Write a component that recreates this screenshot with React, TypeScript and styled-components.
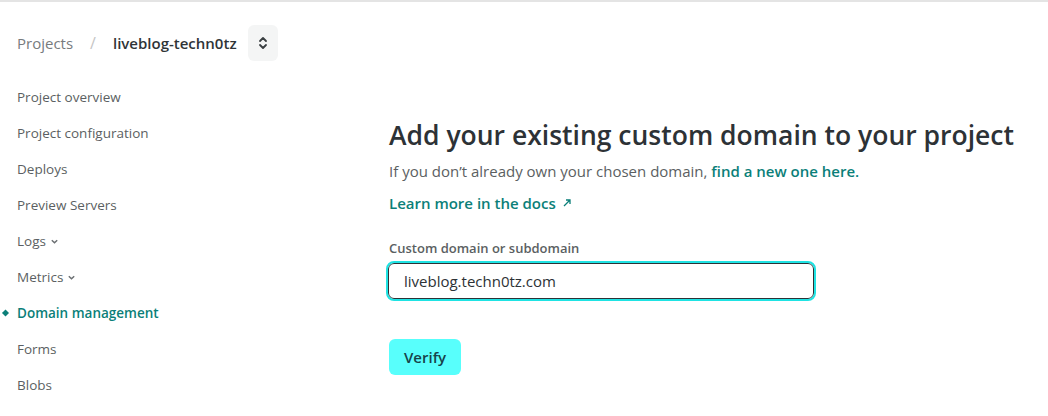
import React from 'react';
import styled, { createGlobalStyle } from 'styled-components';

const GlobalStyle = createGlobalStyle`
  html, body {
    margin: 0;
    padding: 0;
    background: #fff;
    font-family: 'Open Sans', 'Noto Sans', sans-serif;
  }
`;

const Page = styled.div`
  width: 1048px;
  height: 416px;
  border-top: 2px solid #e4e4e4;
  box-sizing: border-box;
  overflow: hidden;
`;

const Header = styled.div`
  display: flex;
  align-items: center;
  height: 36px;
  margin-top: 23px;
  padding-left: 17px;
`;

const Crumb = styled.span<{ current?: boolean }>`
  font-size: 15px;
  color: ${p => (p.current ? '#2f3437' : '#777b7e')};
  font-weight: ${p => (p.current ? 600 : 400)};
`;

const Slash = styled.span`
  color: #c5c5c5;
  font-size: 16px;
  margin: 0 17px 0 17px;
`;

const SwitchButton = styled.button`
  width: 30px;
  height: 36px;
  margin-left: 11px;
  border: none;
  border-radius: 6px;
  background: #f4f5f5;
  display: flex;
  align-items: center;
  justify-content: center;
  padding: 0;
`;

const Body = styled.div`
  display: grid;
  grid-template-columns: 389px 1fr;
`;

const Sidebar = styled.nav`
  display: flex;
  flex-direction: column;
  padding-top: 18px;
`;

const NavItem = styled.div<{ active?: boolean }>`
  position: relative;
  height: 36px;
  display: flex;
  align-items: center;
  gap: 4px;
  padding-left: 17px;
  font-size: 13.5px;
  color: ${p => (p.active ? '#0b7f79' : '#5b5f62')};
  font-weight: ${p => (p.active ? 600 : 400)};
`;

const Bullet = styled.span`
  position: absolute;
  left: 3px;
  top: 50%;
  width: 5px;
  height: 5px;
  background: #0b7f79;
  transform: translateY(-50%) rotate(45deg);
`;

const Main = styled.main`
  padding-top: 56px;
  display: flex;
  flex-direction: column;
`;

const Title = styled.h1`
  margin: 0 0 7px;
  font-size: 26.5px;
  font-weight: 600;
  color: #2d3236;
  line-height: 36px;
`;

const Lead = styled.p`
  margin: 0;
  font-size: 15px;
  color: #5b5f62;
  line-height: 22px;
`;

const Link = styled.a`
  color: #0b7f79;
  font-weight: 600;
  text-decoration: none;
`;

const DocsLink = styled(Link)`
  margin-top: 10px;
  font-size: 15px;
  line-height: 22px;
  display: flex;
  align-items: center;
  gap: 6px;
`;

const Label = styled.label`
  margin-top: 25px;
  font-size: 13px;
  font-weight: 600;
  color: #5b5f62;
  line-height: 18px;
`;

const Input = styled.input`
  margin-top: 6px;
  width: 426px;
  height: 36px;
  box-sizing: border-box;
  border: 1px solid #2d3236;
  border-radius: 6px;
  outline: 2px solid #1fe3e3;
  outline-offset: 0;
  padding: 0 15px;
  font-family: inherit;
  font-size: 15px;
  color: #2d3236;
  margin-left: -1px;
`;

const VerifyButton = styled.button`
  margin-top: 40px;
  align-self: flex-start;
  height: 36px;
  padding: 0 15px;
  border: none;
  border-radius: 6px;
  background: #58fffc;
  color: #17434a;
  font-family: inherit;
  font-size: 15px;
  font-weight: 600;
`;

const navItems: { label: string; caret?: boolean; active?: boolean }[] = [
  { label: 'Project overview' },
  { label: 'Project configuration' },
  { label: 'Deploys' },
  { label: 'Preview Servers' },
  { label: 'Logs', caret: true },
  { label: 'Metrics', caret: true },
  { label: 'Domain management', active: true },
  { label: 'Forms' },
  { label: 'Blobs' },
];

const Caret = () => (
  <svg width="9" height="9" viewBox="0 0 10 10" fill="none" stroke="#6b6f72" strokeWidth="1.6">
    <path d="M2 3.5 L5 6.5 L8 3.5" />
  </svg>
);

const App: React.FC = () => (
  <Page>
    <GlobalStyle />
    <Header>
      <Crumb>Projects</Crumb>
      <Slash>/</Slash>
      <Crumb current>liveblog-techn0tz</Crumb>
      <SwitchButton aria-label="Switch project">
        <svg width="12" height="14" viewBox="0 0 12 14" fill="none" stroke="#3a3f42" strokeWidth="1.8" strokeLinecap="round" strokeLinejoin="round">
          <path d="M3 5 L6 2 L9 5" />
          <path d="M3 9 L6 12 L9 9" />
        </svg>
      </SwitchButton>
    </Header>
    <Body>
      <Sidebar>
        {navItems.map(item => (
          <NavItem key={item.label} active={item.active}>
            {item.active && <Bullet />}
            {item.label}
            {item.caret && <Caret />}
          </NavItem>
        ))}
      </Sidebar>
      <Main>
        <Title>Add your existing custom domain to your project</Title>
        <Lead>
          If you don’t already own your chosen domain, <Link href="#">find a new one here.</Link>
        </Lead>
        <DocsLink href="#">
          Learn more in the docs
          <svg width="10" height="10" viewBox="0 0 10 10" fill="none" stroke="#0b7f79" strokeWidth="1.3">
            <path d="M2 8 L8 2 M4 2 H8 V6" />
          </svg>
        </DocsLink>
        <Label>Custom domain or subdomain</Label>
        <Input defaultValue="liveblog.techn0tz.com" />
        <VerifyButton>Verify</VerifyButton>
      </Main>
    </Body>
  </Page>
);

export default App;
